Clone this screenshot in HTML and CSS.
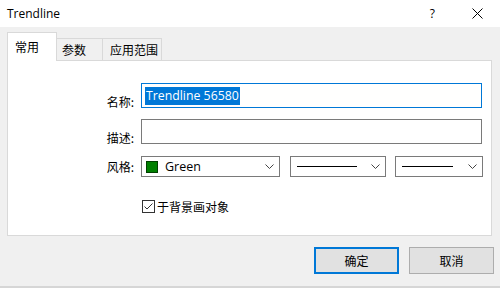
FILE: index.html
```html
<!DOCTYPE html>
<html>
<head>
<meta charset="utf-8">
<link rel="stylesheet" href="styles.css">
</head>
<body>
<div class="window">
  <div class="titlebar">
    <span class="title">Trendline</span>
    <span class="help">?</span>
    <svg class="close" width="11" height="11" viewBox="0 0 11 11"><path d="M0.5 0.5L10.5 10.5M10.5 0.5L0.5 10.5" stroke="#000" stroke-width="1" fill="none"/></svg>
  </div>
  <div class="body">
    <div class="tabs">
      <div class="tab active">常用</div>
      <div class="tab t2">参数</div>
      <div class="tab t3">应用范围</div>
    </div>
    <div class="panel">
      <div class="form">
        <label class="lbl">名称:</label>
        <div class="input focused"><span class="sel">Trendline 56580</span></div>
        <label class="lbl">描述:</label>
        <div class="input"></div>
        <label class="lbl lbl-style">风格:</label>
        <div class="selects">
          <div class="select s1"><span class="swatch"></span><span class="sel-text">Green</span><svg class="chev" width="9" height="5" viewBox="0 0 9 5"><path d="M0.5 0.5L4.5 4.5L8.5 0.5" stroke="#444" fill="none"/></svg></div>
          <div class="select s2"><span class="line"></span><svg class="chev" width="9" height="5" viewBox="0 0 9 5"><path d="M0.5 0.5L4.5 4.5L8.5 0.5" stroke="#444" fill="none"/></svg></div>
          <div class="select s3"><span class="line"></span><svg class="chev" width="9" height="5" viewBox="0 0 9 5"><path d="M0.5 0.5L4.5 4.5L8.5 0.5" stroke="#444" fill="none"/></svg></div>
        </div>
        <span></span>
        <div class="check-row">
          <svg class="check" width="13" height="13" viewBox="0 0 13 13"><rect x="0.5" y="0.5" width="12" height="12" fill="#fff" stroke="#333"/><path d="M2.5 6.5L5 9L10.5 3.5" stroke="#333" stroke-width="1" fill="none"/></svg>
          <span>于背景画对象</span>
        </div>
      </div>
    </div>
    <div class="buttons">
      <div class="btn primary">确定</div>
      <div class="btn">取消</div>
    </div>
  </div>
  <div class="bottom-edge"></div>
</div>
</body>
</html>
```
FILE: styles.css
```css
html, body {
  margin: 0;
  padding: 0;
}
body {
  width: 500px;
  height: 288px;
  overflow: hidden;
  background: #f0f0f0;
  font-family: "Noto Sans CJK SC", "Noto Sans", sans-serif;
  font-size: 12px;
  color: #000;
}
.window {
  display: flex;
  flex-direction: column;
  height: 288px;
}
.titlebar {
  height: 27px;
  background: #fff;
  display: flex;
  align-items: center;
  padding-left: 7px;
  flex-shrink: 0;
}
.title {
  font-family: "Open Sans", "Noto Sans", sans-serif;
  font-size: 12px;
  flex: 1;
}
.help {
  font-family: "Open Sans", sans-serif;
  font-size: 12px;
  margin-right: 37px;
}
.close {
  margin-right: 17px;
}
.body {
  flex: 1;
  padding-top: 5px;
}
.tabs {
  display: flex;
  align-items: flex-end;
  height: 28px;
  margin-left: 7px;
  position: relative;
  z-index: 1;
}
.tab {
  height: 22px;
  box-sizing: border-box;
  border: 1px solid #d9d9d9;
  border-bottom: none;
  border-left: none;
  background: #f0f0f0;
  display: flex;
  align-items: center;
  line-height: 1;
}
.t2 {
  width: 46px;
  padding-left: 5px;
}
.t3 {
  width: 59px;
  padding-left: 7px;
}
.tab.active {
  width: 50px;
  background: #fff;
  border-left: 1px solid #d9d9d9;
  padding: 8px 0 0 7px;
  margin-bottom: -1px;
  height: 29px;
  align-items: flex-start;
}
.panel {
  margin: 0 8px 0 7px;
  height: 176px;
  box-sizing: border-box;
  background: #fff;
  border: 1px solid #d9d9d9;
}
.form {
  display: grid;
  grid-template-columns: 126px auto;
  column-gap: 7px;
  padding-top: 22px;
  align-items: center;
}
.lbl {
  text-align: right;
}
.input {
  width: 341px;
  height: 25px;
  box-sizing: border-box;
  border: 1px solid #7a7a7a;
  margin-bottom: 11px;
  display: flex;
  align-items: center;
  padding-left: 3px;
}
.input.focused {
  border-color: #0078d7;
  background: #fffffe;
}
.sel {
  background: #0078d7;
  color: #fff;
  font-family: "Open Sans", "Noto Sans", sans-serif;
  font-size: 12.3px;
  line-height: 18px;
  padding: 0 1px;
}
.lbl-style {
  margin-top: 1px;
}
.selects {
  display: flex;
  margin-top: 1px;
}
.select {
  height: 21px;
  box-sizing: border-box;
  border: 1px solid #7a7a7a;
  display: flex;
  align-items: center;
  background: #fff;
}
.s1 {
  width: 139px;
  padding-left: 4px;
}
.s2 {
  width: 96px;
  margin-left: 10px;
  padding-left: 6px;
}
.s3 {
  width: 88px;
  margin-left: 9px;
  padding-left: 6px;
}
.swatch {
  width: 12px;
  height: 12px;
  background: #008000;
  border: 1px solid #004000;
  box-sizing: border-box;
}
.sel-text {
  font-family: "Open Sans", "Noto Sans", sans-serif;
  font-size: 12.5px;
  margin-left: 7px;
  flex: 1;
}
.line {
  height: 1px;
  background: #000;
  flex: 1;
  margin-right: 13px;
}
.s2 .line { margin-right: 14px; }
.s3 .line { margin-right: 15px; }
.chev {
  margin-right: 5px;
}
.check-row {
  display: flex;
  align-items: center;
  margin-top: 21px;
  margin-left: 1px;
}
.check {
  margin-right: 2px;
}
.buttons {
  display: flex;
  justify-content: flex-end;
  margin-top: 11px;
  margin-right: 6px;
}
.btn {
  width: 85px;
  height: 27px;
  box-sizing: border-box;
  background: #e1e1e1;
  border: 1px solid #adadad;
  display: flex;
  align-items: center;
  justify-content: center;
  margin-left: 10px;
}
.btn.primary {
  border: 2px solid #0078d7;
}
.bottom-edge {
  height: 2px;
  background: #d6d6d6;
  flex-shrink: 0;
}
```
